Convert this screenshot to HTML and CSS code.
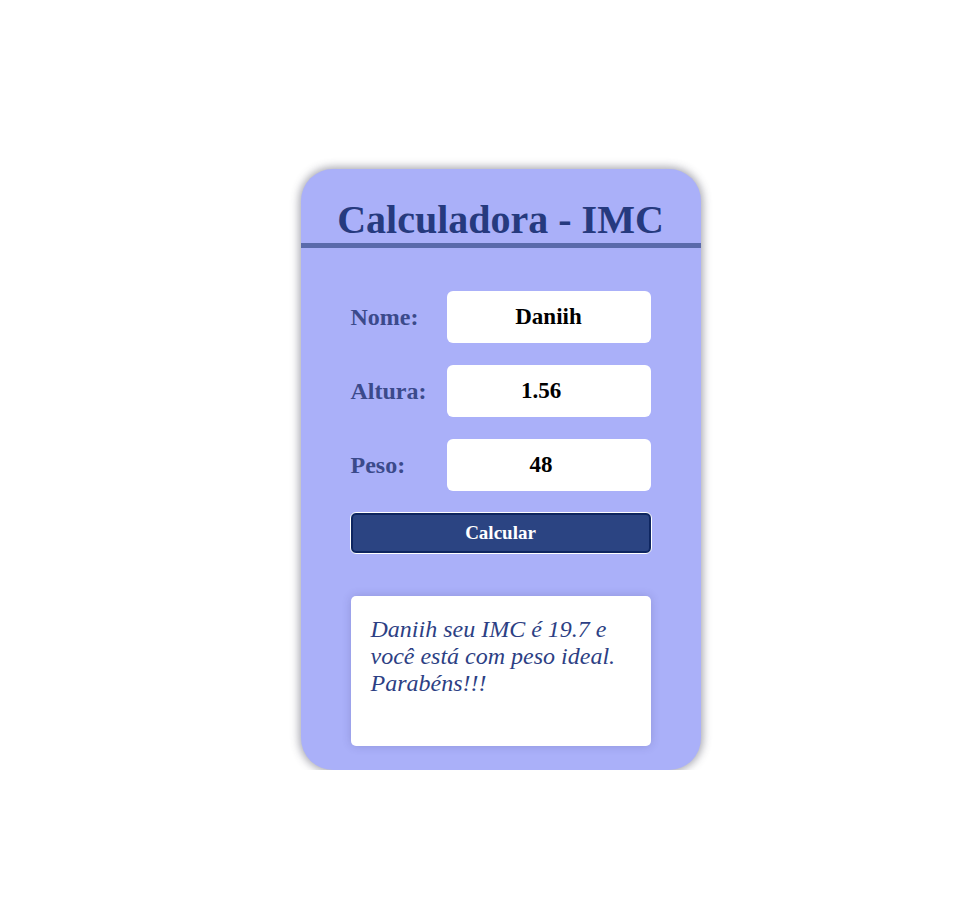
FILE: index.html
```html
<!DOCTYPE html>
<html lang="pt-BR">
<head>
<meta charset="utf-8">
<title>Calculadora - IMC</title>
<link rel="stylesheet" href="styles.css">
</head>
<body>
<main class="card">
  <header class="card-header">
    <h1 class="title">Calculadora - IMC</h1>
  </header>
  <form class="form">
    <div class="row">
      <label class="label" for="nome">Nome:</label>
      <input class="field" id="nome" type="text" value="Daniih">
    </div>
    <div class="row">
      <label class="label" for="altura">Altura:</label>
      <input class="field" id="altura" type="number" step="0.01" value="1.56">
    </div>
    <div class="row">
      <label class="label" for="peso">Peso:</label>
      <input class="field" id="peso" type="number" value="48">
    </div>
    <button class="btn" type="button">Calcular</button>
  </form>
  <div class="result">Daniih seu IMC é 19.7 e você está com peso ideal. Parabéns!!!</div>
</main>
</body>
</html>
```
FILE: styles.css
```css
html, body {
  margin: 0;
  padding: 0;
  background: #ffffff;
}
body {
  font-family: "Liberation Serif", "Times New Roman", serif;
  display: flex;
  justify-content: center;
  padding-top: 169px;
  padding-left: 31px;
}
.card {
  width: 400px;
  height: 601px;
  box-sizing: border-box;
  background: #aab0f9;
  border-radius: 32px;
  box-shadow: 0 0 8px 2px rgba(60, 60, 80, 0.45);
  display: flex;
  flex-direction: column;
  overflow: hidden;
}
.card-header {
  padding-top: 28px;
  border-bottom: 5px solid #5a6aab;
}
.title {
  margin: 0;
  font-size: 40px;
  font-weight: bold;
  text-align: center;
  color: #263a7e;
  line-height: 46px;
}
.form {
  padding: 43px 50px 0 50px;
  display: flex;
  flex-direction: column;
  gap: 22px;
}
.row {
  display: flex;
  align-items: center;
  justify-content: space-between;
}
.label {
  font-size: 24px;
  font-weight: bold;
  color: #3b4a8b;
}
.field {
  width: 204px;
  height: 52px;
  box-sizing: border-box;
  border: none;
  border-radius: 6px;
  background: #ffffff;
  font-family: "Liberation Serif", "Times New Roman", serif;
  font-size: 23px;
  font-weight: bold;
  color: #000000;
  text-align: center;
  outline: none;
  padding: 0;
}
.btn {
  margin-top: -1px;
  height: 42px;
  width: 302px;
  margin-left: -1px;
  box-sizing: border-box;
  background: #2b4482;
  color: #ffffff;
  border: 1px solid #ffffff;
  border-radius: 6px;
  box-shadow: inset 0 0 0 2px #0e2660;
  font-family: "Liberation Serif", "Times New Roman", serif;
  font-size: 19px;
  font-weight: bold;
  cursor: pointer;
}
.result {
  margin: 42px 50px 0 50px;
  height: 150px;
  box-sizing: border-box;
  background: #ffffff;
  border-radius: 5px;
  box-shadow: 0 0 10px rgba(40, 40, 100, 0.2);
  padding: 20px 20px;
  font-style: italic;
  font-size: 24px;
  line-height: 27px;
  color: #2d3f84;
}
```
